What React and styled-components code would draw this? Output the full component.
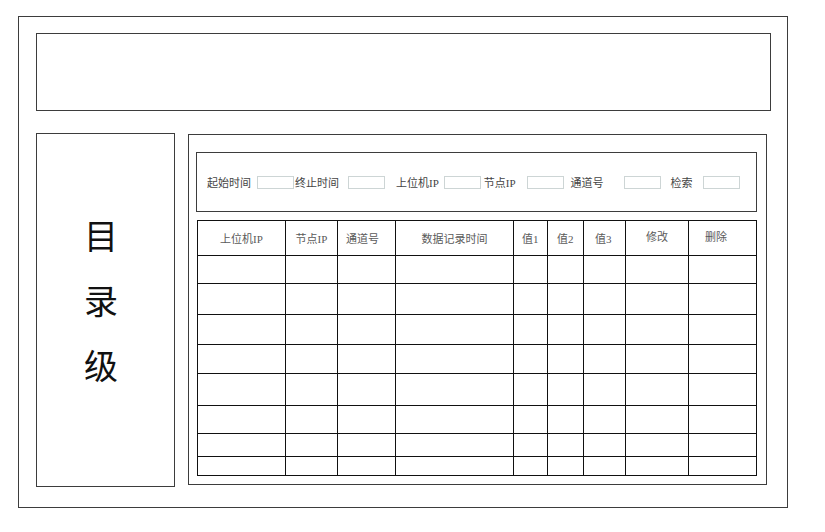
import React from 'react';
import styled, { createGlobalStyle } from 'styled-components';

const GlobalStyle = createGlobalStyle`
  html, body {
    margin: 0;
    padding: 0;
    background: #fff;
  }
  body {
    font-family: "Liberation Serif", "Noto Sans CJK SC", serif;
  }
`;

const Frame = styled.div`
  box-sizing: border-box;
  width: 770px;
  height: 492px;
  margin: 16px 0 0 18px;
  padding: 16px 0 0 17px;
  border: 1px solid #3d3d3d;
`;

const Header = styled.div`
  box-sizing: border-box;
  width: 735px;
  height: 78px;
  border: 1px solid #3d3d3d;
`;

const Body = styled.div`
  display: flex;
  align-items: flex-start;
  gap: 13px;
  margin-top: 22px;
`;

const Sidebar = styled.div`
  box-sizing: border-box;
  width: 139px;
  height: 354px;
  border: 1px solid #3d3d3d;
  padding: 68px 9px 0 0;
  display: flex;
  flex-direction: column;
  align-items: center;
`;

const SideChar = styled.div`
  font-family: "Noto Sans CJK SC", sans-serif;
  font-size: 34px;
  line-height: 65px;
  color: #111;
`;

const Panel = styled.div`
  box-sizing: border-box;
  width: 579px;
  height: 351px;
  margin-top: 1px;
  border: 1px solid #3d3d3d;
  padding: 17px 0 0 7px;
`;

const SearchBox = styled.div`
  box-sizing: border-box;
  width: 561px;
  height: 60px;
  border: 1px solid #3d3d3d;
  display: flex;
  align-items: center;
`;

const Label = styled.span`
  font-size: 11px;
  color: #444;
  margin-left: ${p => p.$ml}px;
  white-space: nowrap;
`;

const Field = styled.span`
  box-sizing: border-box;
  display: inline-block;
  width: 37px;
  height: 13px;
  border: 1px solid #cdd5d5;
  margin-left: ${p => p.$ml}px;
`;

const Grid = styled.table`
  width: 560px;
  margin: 8px 0 0 1px;
  border-collapse: collapse;
  table-layout: fixed;
  border: 1px solid #111;
`;

const HeadCell = styled.th`
  font-weight: normal;
  font-size: 11px;
  color: #5a5a5a;
  border: 1px solid #111;
  padding: ${p => (p.$up ? '0 0 4px' : '0')};
  padding-left: ${p => (p.$pad != null ? `${p.$pad}px` : '0')};
  text-align: ${p => (p.$pad != null ? 'left' : 'center')};
  vertical-align: middle;
  white-space: nowrap;
`;

const Row = styled.tr`
  height: ${p => p.$h}px;
`;

const Cell = styled.td`
  border: 1px solid #111;
  padding: 0;
`;

const fields = [
  { label: '起始时间', lm: 10, im: 6 },
  { label: '终止时间', lm: 1, im: 9 },
  { label: '上位机IP', lm: 11, im: 5 },
  { label: '节点IP', lm: 3, im: 11 },
  { label: '通道号', lm: 7, im: 20 },
  { label: '检索', lm: 10, im: 10 },
];

const columns = [
  { title: '上位机IP', w: 88 },
  { title: '节点IP', w: 52 },
  { title: '通道号', w: 58, pad: 8 },
  { title: '数据记录时间', w: 118 },
  { title: '值1', w: 34, pad: 8 },
  { title: '值2', w: 36, pad: 9 },
  { title: '值3', w: 42, pad: 11 },
  { title: '修改', w: 63, up: true },
  { title: '删除', w: 68, pad: 16, up: true },
];

const rowHeights = [28, 31, 30, 29, 32, 28, 23, 19];

export default function App() {
  return (
    <>
      <GlobalStyle />
      <Frame>
        <Header />
        <Body>
          <Sidebar>
            {['目', '录', '级'].map(c => (
              <SideChar key={c}>{c}</SideChar>
            ))}
          </Sidebar>
          <Panel>
            <SearchBox>
              {fields.map(f => (
                <React.Fragment key={f.label}>
                  <Label $ml={f.lm}>{f.label}</Label>
                  <Field $ml={f.im} />
                </React.Fragment>
              ))}
            </SearchBox>
            <Grid>
              <colgroup>
                {columns.map(c => (
                  <col key={c.title} style={{ width: c.w }} />
                ))}
              </colgroup>
              <thead>
                <Row $h={35}>
                  {columns.map(c => (
                    <HeadCell key={c.title} $pad={c.pad} $up={c.up}>
                      {c.title}
                    </HeadCell>
                  ))}
                </Row>
              </thead>
              <tbody>
                {rowHeights.map((h, i) => (
                  <Row key={i} $h={h}>
                    {columns.map(c => (
                      <Cell key={c.title} />
                    ))}
                  </Row>
                ))}
              </tbody>
            </Grid>
          </Panel>
        </Body>
      </Frame>
    </>
  );
}
